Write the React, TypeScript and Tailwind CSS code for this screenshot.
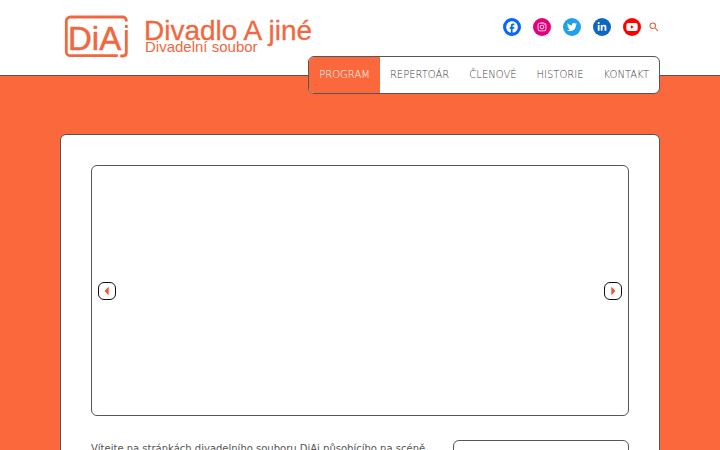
import { FaInstagram, FaTwitter, FaLinkedinIn, FaYoutube } from 'react-icons/fa';
import { MdFacebook, MdSearch, MdArrowLeft, MdArrowRight } from 'react-icons/md';

const menu = [
  { label: 'PROGRAM', href: '#program', active: true },
  { label: 'REPERTOÁR', href: '#repertoar' },
  { label: 'ČLENOVÉ', href: '#clenove' },
  { label: 'HISTORIE', href: '#historie' },
  { label: 'KONTAKT', href: '#kontakt' },
];

const socials = [
  { label: 'Facebook', color: 'bg-[#0866ff]', icon: <MdFacebook className="h-3.5 w-3.5" /> },
  { label: 'Instagram', color: 'bg-[#e4007c]', icon: <FaInstagram className="h-2.5 w-2.5" /> },
  { label: 'Twitter', color: 'bg-[#21a1ec]', icon: <FaTwitter className="h-2.5 w-2.5" /> },
  { label: 'LinkedIn', color: 'bg-[#0d66c2]', icon: <FaLinkedinIn className="h-2.5 w-2.5" /> },
  { label: 'YouTube', color: 'bg-[#ff0000]', icon: <FaYoutube className="h-3 w-3" /> },
];

function Logo() {
  return (
    <a href="#domu" aria-label="Divadlo A jiné" className="shrink-0 pl-1 pt-3">
      <svg
        width="244"
        height="48"
        viewBox="0 0 244 48"
        fill="#f0683f"
        fontFamily="'Liberation Sans', Arial, sans-serif"
        className="overflow-visible"
      >
        {/* frame, open around the letter j */}
        <g fill="none" stroke="#f0683f" strokeWidth="2.8">
          <path d="M62.3 9.5V8.500a3.500 3.500 0 0 0-3.500-3.500H6.300a4 4 0 0 0-4 4v30.700a4 4 0 0 0 4 4h47.500" />
          <path d="M62.3 13v3M62.300 18v22.500c0 2.300-1.200 3.500-3.500 3.500h-2.500" />
        </g>
        <text x="4" y="38" fontSize="33" stroke="#f0683f" strokeWidth="0.5">DiA</text>
        <text x="80" y="28" fontSize="28" stroke="#f0683f" strokeWidth="0.3">Divadlo A jiné</text>
        <text x="81" y="40" fontSize="15">Divadelní soubor</text>
      </svg>
    </a>
  );
}

function Header() {
  return (
    <header className="border-b border-[#555] bg-white">
      <div className="mx-auto flex w-5/6 items-start justify-between">
        <Logo />
        <div className="-mb-[19px] flex shrink-0 flex-col items-end">
          <div className="flex items-center gap-3 pt-[18px]">
            {socials.map((item) => (
              <a
                key={item.label}
                href="#social"
                aria-label={item.label}
                className={`flex h-[18px] w-[18px] items-center justify-center rounded-full text-white ${item.color}`}
              >
                {item.icon}
              </a>
            ))}
            <button aria-label="Hledat" className="-ml-[5px] text-[#dd5f3c]">
              <MdSearch className="h-3 w-3" />
            </button>
          </div>
          <nav className="mt-5 flex overflow-hidden rounded-md border border-[#555] bg-white">
            {menu.map((item) => (
              <a
                key={item.label}
                href={item.href}
                className={`px-2.5 text-[10px] leading-9 font-extralight ${
                  item.active ? 'bg-[#fb683c] text-white' : 'text-[#444]'
                }`}
              >
                {item.label}
              </a>
            ))}
          </nav>
        </div>
      </div>
    </header>
  );
}

function Slider() {
  const arrow =
    'flex h-[18px] w-[18px] items-center justify-center rounded-md border border-[#111] bg-white text-[#f0542f]';

  return (
    <section
      aria-label="Fotogalerie"
      className="flex aspect-[538/251] items-center justify-between rounded-md border border-[#555] px-1.5"
    >
      <button aria-label="Předchozí" className={arrow}>
        <MdArrowLeft className="h-5 w-5 shrink-0" />
      </button>
      <button aria-label="Další" className={arrow}>
        <MdArrowRight className="h-5 w-5 shrink-0" />
      </button>
    </section>
  );
}

export default function App() {
  return (
    <div className="h-screen overflow-hidden bg-[#fb683c] font-['DejaVu_Sans',sans-serif]">
      <Header />
      <main className="mx-auto mt-[58px] min-h-screen w-5/6 rounded-md border border-[#555] bg-white p-[30px]">
        <Slider />
        <div className="mt-6 flex items-start gap-6">
          <p className="flex-1 text-[10px] leading-[18px] text-[#555]">
            Vítejte na stránkách divadelního souboru DiAj působícího na scéně
          </p>
          <aside className="min-h-40 w-[176px] rounded-md border border-[#555]" />
        </div>
      </main>
    </div>
  );
}
